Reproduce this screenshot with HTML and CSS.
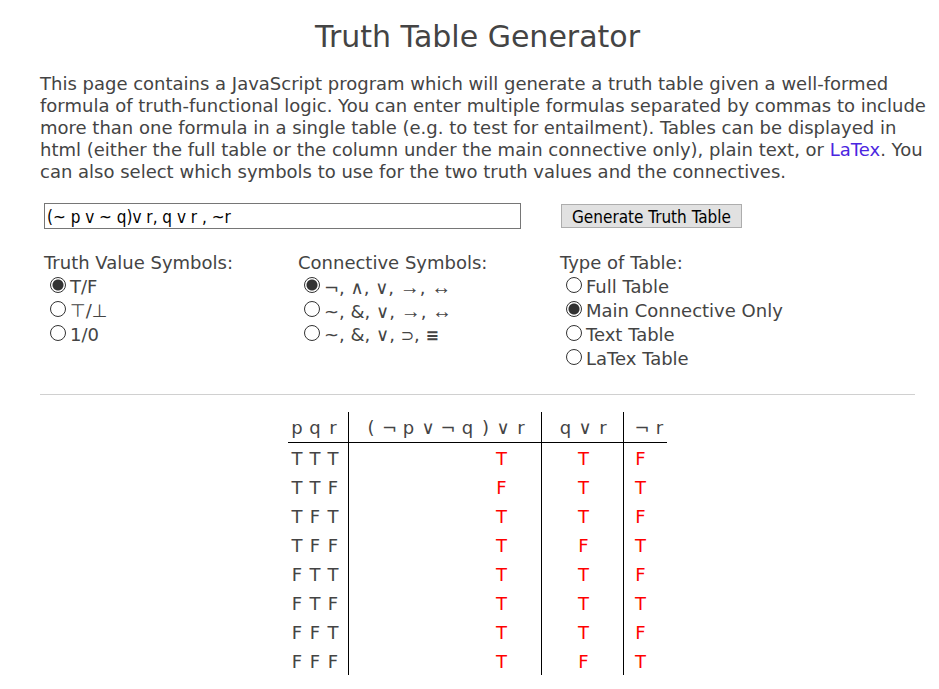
FILE: index.html
```html
<!DOCTYPE html>
<html lang="en">
<head>
<meta charset="utf-8">
<title>Truth Table Generator</title>
<link rel="stylesheet" href="styles.css">
</head>
<body>
<main>
<h1>Truth Table Generator</h1>
<p class="intro">This page contains a JavaScript program which will generate a truth table given a well-formed<br>formula of truth-functional logic. You can enter multiple formulas separated by commas to include<br>more than one formula in a single table (e.g. to test for entailment). Tables can be displayed in<br>html (either the full table or the column under the main connective only), plain text, or <a href="#latex">LaTex</a>. You<br>can also select which symbols to use for the two truth values and the connectives.</p>
<form class="options">
<input class="formula" type="text" aria-label="Formulas" value="(~ p v ~ q)v r, q v r , ~r">
<button class="generate" type="button">Generate Truth Table</button>
<fieldset>
<legend>Truth Value Symbols:</legend>
<label><input type="radio" name="values" checked>T/F</label>
<label><input type="radio" name="values">⊤/⊥</label>
<label><input type="radio" name="values">1/0</label>
</fieldset>
<fieldset>
<legend>Connective Symbols:</legend>
<label><input type="radio" name="connectives" checked>¬, ∧, ∨, <span class="arrow">→</span>, <span class="arrow">↔</span></label>
<label><input type="radio" name="connectives">~, &amp;, ∨, <span class="arrow">→</span>, <span class="arrow">↔</span></label>
<label><input type="radio" name="connectives">~, &amp;, ∨, <span class="sym">⊃</span>, <b class="sym">≡</b></label>
</fieldset>
<fieldset>
<legend>Type of Table:</legend>
<label><input type="radio" name="type">Full Table</label>
<label><input type="radio" name="type" checked>Main Connective Only</label>
<label><input type="radio" name="type">Text Table</label>
<label><input type="radio" name="type">LaTex Table</label>
</fieldset>
</form>
<hr>
<table class="truth">
<colgroup><col class="c18"><col class="c18"><col class="c25"><col class="c31"><col class="c19"><col class="c19"><col class="c20"><col class="c20"><col class="c19"><col class="c17"><col class="c18"><col class="c30"><col class="c34"><col class="c18"><col class="c30"><col class="c28"><col class="c15"></colgroup>
<thead>
<tr><th>p</th><th>q</th><th class="end vars">r</th><th class="start">(</th><th>¬</th><th>p</th><th>∨</th><th>¬</th><th>q</th><th>)</th><th>∨</th><th class="end">r</th><th class="start">q</th><th>∨</th><th class="end">r</th><th class="start tight">¬</th><th>r</th></tr>
</thead>
<tbody>
<tr><td>T</td><td>T</td><td class="end vars">T</td><td></td><td></td><td></td><td></td><td></td><td></td><td></td><td class="main">T</td><td class="end"></td><td></td><td class="main">T</td><td class="end"></td><td class="main tight">F</td><td></td></tr>
<tr><td>T</td><td>T</td><td class="end vars">F</td><td></td><td></td><td></td><td></td><td></td><td></td><td></td><td class="main">F</td><td class="end"></td><td></td><td class="main">T</td><td class="end"></td><td class="main tight">T</td><td></td></tr>
<tr><td>T</td><td>F</td><td class="end vars">T</td><td></td><td></td><td></td><td></td><td></td><td></td><td></td><td class="main">T</td><td class="end"></td><td></td><td class="main">T</td><td class="end"></td><td class="main tight">F</td><td></td></tr>
<tr><td>T</td><td>F</td><td class="end vars">F</td><td></td><td></td><td></td><td></td><td></td><td></td><td></td><td class="main">T</td><td class="end"></td><td></td><td class="main">F</td><td class="end"></td><td class="main tight">T</td><td></td></tr>
<tr><td>F</td><td>T</td><td class="end vars">T</td><td></td><td></td><td></td><td></td><td></td><td></td><td></td><td class="main">T</td><td class="end"></td><td></td><td class="main">T</td><td class="end"></td><td class="main tight">F</td><td></td></tr>
<tr><td>F</td><td>T</td><td class="end vars">F</td><td></td><td></td><td></td><td></td><td></td><td></td><td></td><td class="main">T</td><td class="end"></td><td></td><td class="main">T</td><td class="end"></td><td class="main tight">T</td><td></td></tr>
<tr><td>F</td><td>F</td><td class="end vars">T</td><td></td><td></td><td></td><td></td><td></td><td></td><td></td><td class="main">T</td><td class="end"></td><td></td><td class="main">T</td><td class="end"></td><td class="main tight">F</td><td></td></tr>
<tr><td>F</td><td>F</td><td class="end vars">F</td><td></td><td></td><td></td><td></td><td></td><td></td><td></td><td class="main">T</td><td class="end"></td><td></td><td class="main">F</td><td class="end"></td><td class="main tight">T</td><td></td></tr>
</tbody>
</table>
</main>
</body>
</html>
```
FILE: styles.css
```css
* { box-sizing: border-box; }
body {
  margin: 0;
  background: #fff;
  color: #444;
  font: 18px/22px "DejaVu Sans", Verdana, sans-serif;
}
main { padding: 17px 24px 14px 40px; }
h1 {
  margin: 0 0 16px;
  font-size: 30px;
  line-height: 40px;
  font-weight: normal;
  text-align: center;
}
.intro { margin: 0; white-space: nowrap; }
a { color: #4b26e0; text-decoration: none; }
.options {
  display: grid;
  grid-template-columns: 254px 262px 1fr;
  row-gap: 22px;
  align-items: start;
  margin-top: 20px;
  padding-left: 4px;
}
.formula {
  grid-column: span 2;
  width: 477px;
  height: 26px;
  padding: 2px 2px 0;
  border: 1px solid #767676;
  background: #fff;
  color: #000;
  font: 17px "DejaVu Sans Condensed", "DejaVu Sans", sans-serif;
}
.generate {
  justify-self: start;
  height: 24px;
  margin: 1px;
  padding: 2px 10px 0;
  border: 1px solid #adadad;
  background: #e1e1e1;
  color: #000;
  font: 17px "DejaVu Sans Condensed", "DejaVu Sans", sans-serif;
}
fieldset { min-width: 0; margin: 0; padding: 0; border: 0; }
legend { padding: 0; line-height: 24px; }
label {
  display: flex;
  align-items: baseline;
  height: 24px;
  padding-left: 6px;
  line-height: 24px;
  white-space: pre;
}
input[type="radio"] {
  appearance: none;
  align-self: flex-start;
  flex: none;
  width: 16px;
  height: 16px;
  margin: 2px 4px 0 0;
  border: 1px solid #333;
  border-radius: 50%;
  background: #fff;
}
input[type="radio"]:checked {
  background: radial-gradient(circle, #333 0 5px, #fff 6px);
}
.sym { font-size: 16px; }
.arrow { font-family: "Liberation Serif", serif; font-size: 20px; }
hr { height: 1px; margin: 23px 0 17px; border: 0; background: #d0d0d0; }
.truth {
  table-layout: fixed;
  width: 379px;
  margin: 0 auto;
  border-collapse: separate;
  border-spacing: 0;
}
th, td { height: 29px; padding: 2px 0 0; font-weight: normal; text-align: center; line-height: 22px; }
th { height: 31px; border-bottom: 1px solid #000; }
.end { padding-right: 11px; border-right: 1px solid #000; }
.vars { padding-right: 6px; }
.start { padding-left: 13px; }
.tight { padding-left: 8px; }
.main { padding-right: 3px; color: #f00; }
.c15 { width: 15px; }
.c17 { width: 17px; }
.c18 { width: 18px; }
.c19 { width: 19px; }
.c20 { width: 20px; }
.c25 { width: 25px; }
.c28 { width: 28px; }
.c30 { width: 30px; }
.c31 { width: 31px; }
.c34 { width: 34px; }
```
